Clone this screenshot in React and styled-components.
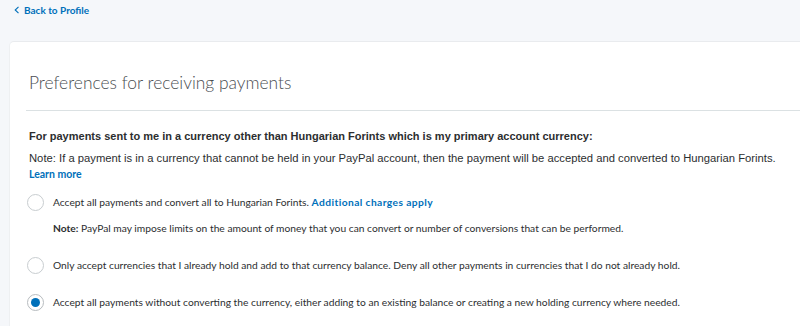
import React, { useState } from 'react';
import styled, { createGlobalStyle } from 'styled-components';

const GlobalStyle = createGlobalStyle`
  html, body {
    margin: 0;
    padding: 0;
    background: #f5f7fa;
    overflow: hidden;
  }
`;

const Page = styled.div`
  padding: 0 0 0 9px;
  min-height: 326px;
  box-sizing: border-box;
`;

const BackLink = styled.a`
  display: inline-flex;
  align-items: center;
  gap: 4px;
  margin-left: 5px;
  font-family: Lato, "Open Sans", sans-serif;
  font-size: 10px;
  font-weight: 700;
  color: #0070ba;
  text-decoration: none;
  cursor: pointer;
`;

const Card = styled.section`
  margin-top: 23px;
  margin-right: -20px;
  background: #fff;
  border-top: 1px solid #e9ebee;
  border-left: 1px solid #eef0f2;
  border-radius: 5px 0 0 0;
  min-height: 300px;
`;

const TitleBar = styled.div`
  margin-left: 16px;
  padding: 30px 0 17px 3px;
  border-bottom: 1px solid #dbe1e3;
`;

const Title = styled.h1`
  margin: 0;
  font-family: Lato, "Open Sans", sans-serif;
  font-weight: 300;
  font-size: 17.4px;
  line-height: 21px;
  color: #4a4e52;
`;

const Body = styled.div`
  padding: 18px 0 0 19px;
`;

const Lead = styled.p`
  margin: 0;
  font-family: "Liberation Sans", Arial, sans-serif;
  font-size: ${(p) => (p.bold ? 11 : 11.25)}px;
  font-weight: ${(p) => (p.bold ? 700 : 400)};
  color: #2c2e2f;
  line-height: 14px;
  & + & {
    margin-top: 8px;
  }
`;

const LearnMore = styled.a`
  display: block;
  margin-top: 3px;
  font-family: Lato, "Open Sans", sans-serif;
  font-size: 10.5px;
  font-weight: 700;
  color: #0070ba;
  cursor: pointer;
`;

const Options = styled.div`
  display: flex;
  flex-direction: column;
  margin-top: 14px;
`;

const Option = styled.label`
  display: flex;
  align-items: flex-start;
  gap: 9px;
  margin-bottom: ${(p) => p.space}px;
  cursor: pointer;
`;

const Radio = styled.span`
  flex: none;
  width: 15px;
  height: 15px;
  margin-left: -2px;
  border: 1px solid ${(p) => (p.checked ? '#b7bcbf' : '#c8cdd0')};
  border-radius: 50%;
  background: #fff;
  display: flex;
  align-items: center;
  justify-content: center;
  &::after {
    content: '';
    width: 9px;
    height: 9px;
    border-radius: 50%;
    background: ${(p) => (p.checked ? '#0070ba' : 'transparent')};
  }
`;

const OptionText = styled.div`
  font-family: Lato, "Open Sans", sans-serif;
  font-size: 10.25px;
  color: #2c2e2f;
  line-height: 16px;
`;

const Link = styled.a`
  font-weight: 700;
  letter-spacing: 0.4px;
  color: #0070ba;
  cursor: pointer;
`;

const Note = styled.div`
  margin-top: 10px;
`;

const Chevron = () => (
  <svg width="6" height="8" viewBox="0 0 6 8" fill="none">
    <path d="M4.5 0.8 L1.2 4 L4.5 7.2" stroke="#0070ba" strokeWidth="1.1" />
  </svg>
);

const options = [
  {
    id: 'convert',
    space: 21,
    text: (
      <>
        Accept all payments and convert all to Hungarian Forints.{' '}
        <Link>Additional charges apply</Link>
        <Note>
          <b>Note:</b> PayPal may impose limits on the amount of money that you can
          convert or number of conversions that can be performed.
        </Note>
      </>
    ),
  },
  {
    id: 'hold',
    space: 20,
    text: 'Only accept currencies that I already hold and add to that currency balance. Deny all other payments in currencies that I do not already hold.',
  },
  {
    id: 'all',
    space: 0,
    text: 'Accept all payments without converting the currency, either adding to an existing balance or creating a new holding currency where needed.',
  },
];

export default function App() {
  const [selected, setSelected] = useState('all');

  return (
    <Page>
      <GlobalStyle />
      <BackLink>
        <Chevron />
        Back to Profile
      </BackLink>
      <Card>
        <TitleBar>
          <Title>Preferences for receiving payments</Title>
        </TitleBar>
        <Body>
          <Lead bold>
            For payments sent to me in a currency other than Hungarian Forints which is my
            primary account currency:
          </Lead>
          <Lead>
            Note: If a payment is in a currency that cannot be held in your PayPal account,
            then the payment will be accepted and converted to Hungarian Forints.
          </Lead>
          <LearnMore>Learn more</LearnMore>
          <Options>
            {options.map((o) => (
              <Option key={o.id} space={o.space} onClick={() => setSelected(o.id)}>
                <Radio checked={selected === o.id} />
                <OptionText>{o.text}</OptionText>
              </Option>
            ))}
          </Options>
        </Body>
      </Card>
    </Page>
  );
}
